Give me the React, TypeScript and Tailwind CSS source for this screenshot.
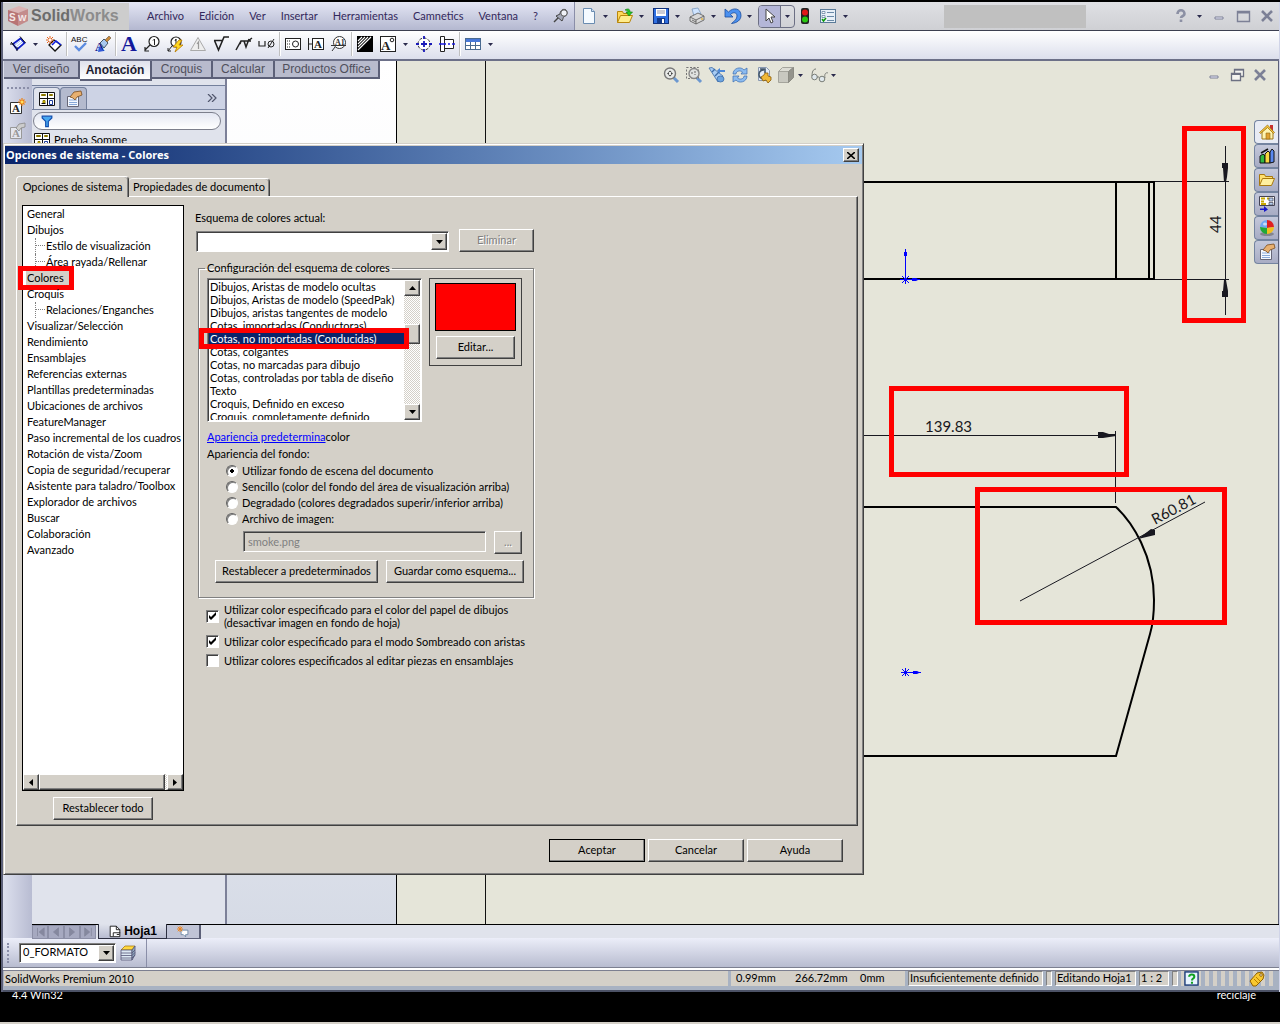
import { useState, type ReactNode } from 'react';
import clsx from 'clsx';

const raised =
  'border border-t-white border-l-white border-r-[#404040] border-b-[#404040] bg-[#d4d0c8] shadow-[inset_-1px_-1px_0_#808080]';
const sunken =
  'border border-t-[#808080] border-l-[#808080] border-r-white border-b-white shadow-[inset_1px_1px_0_#404040]';

const glyphs: Record<string, ReactNode> = {
  dimension: (
    <>
      <path d="M3 8 10.500 2.500 14.500 7 7 13.500z" fill="#fff" stroke="#1020c8" strokeWidth="1.800" />
      <path d="m1 6 5 6M10 .500 15.500 7M0 8h4M7 11v4" stroke="#111" />
      <path d="m5 9 5-4M6 11l6-5" stroke="#8ab0f0" strokeWidth=".8" />
    </>
  ),
  autoDimension: (
    <>
      <path d="m3 9 5-5 7 5-6 6z" fill="#fff" stroke="#111" strokeWidth="1.300" />
      <path d="m6 9 4-4 5 4" fill="none" stroke="#1020e0" strokeWidth="1.600" />
      <path d="M4 0v8M0 4h8M1 1l6 6M7 1 1 7" stroke="#e8641c" />
      <circle cx="4" cy="4" r="1.200" fill="#fff" />
    </>
  ),
  spelling: (
    <>
      <text x="-1" y="6" fontSize="8" fontFamily="Liberation Sans" fill="#111">ABC</text>
      <path d="m3 10 4 4 7-7" fill="none" stroke="#5b8be0" strokeWidth="2.4" />
    </>
  ),
  painter: (
    <>
      <text x="0" y="15" fontSize="13" fontWeight="bold" fontFamily="Liberation Serif" fill="#10208c">A</text>
      <path d="M5 7 9 3l4 4-4 5z" fill="#a8c8f0" stroke="#456" />
      <path d="m10 4 4-4 2 2-4 4z" fill="#c88a3c" stroke="#654" strokeWidth=".6" />
      <path d="m4 10 5 5-6 1z" fill="#3058d8" />
    </>
  ),
  note: (
    <text x="0" y="15" fontSize="22" fontWeight="bold" fontFamily="Liberation Serif" fill="#12199c">A</text>
  ),
  balloon: (
    <>
      <circle cx="10" cy="5.500" r="5" fill="#fff" stroke="#222" strokeWidth="1.2" />
      <path d="m6 9-5 5M1 11v4h4" fill="none" stroke="#222" strokeWidth="1.2" />
      <path d="M9 4.500 10.500 3v6" fill="none" stroke="#222" />
    </>
  ),
  autoBalloon: (
    <>
      <circle cx="9" cy="6" r="5" fill="#fff" stroke="#222" strokeWidth="1.2" />
      <path d="m5 10-4 5M1 12v3h3M8 5l1-2v6" fill="none" stroke="#222" />
      <path d="m12 4-6 7h4l-2 5 8-7h-4l3-5z" fill="#ffd820" stroke="#b87800" strokeWidth=".8" />
    </>
  ),
  warning: (
    <>
      <path d="M8 1.500 15.500 14.500H.5z" fill="#eee" stroke="#aaa" />
      <path d="M7 8l1.500-2v7" fill="none" stroke="#999" strokeWidth="1.200" />
    </>
  ),
  surface: <path d="M1 4.500h9M1.500 4.500 5.500 14 11 1h5" fill="none" stroke="#222" strokeWidth="1.6" />,
  weld: <path d="m0 14 5-9h10M8 5l2 6 3-8M5 5l-1 3M12 5l4-3" fill="none" stroke="#222" strokeWidth="1.5" />,
  hole: (
    <>
      <path d="M0 5v5h6V5" fill="none" stroke="#222" strokeWidth="1.2" />
      <circle cx="12" cy="8" r="3" fill="none" stroke="#222" />
      <path d="m9 12 6-9" stroke="#222" />
    </>
  ),
  tolerance: (
    <>
      <rect x=".5" y="2.500" width="15" height="11" fill="#fff" stroke="#222" />
      <path d="M2 5h3M2 8h3M2 11h3" stroke="#222" strokeDasharray="1 1" />
      <circle cx="10.500" cy="8" r="3" fill="#fff" stroke="#222" />
    </>
  ),
  datum: (
    <>
      <path d="M.5 2v12M1 8h3" stroke="#222" />
      <rect x="4.500" y="2.500" width="11" height="11" fill="#fff" stroke="#222" />
      <text x="6" y="12" fontSize="11" fontWeight="bold" fontFamily="Liberation Serif" fill="#222">A</text>
    </>
  ),
  datumTarget: (
    <>
      <circle cx="8.500" cy="6.500" r="6" fill="#fff" stroke="#333" />
      <path d="m4 11-3 4M0 9.500h15" stroke="#333" />
      <text x="4" y="9" fontSize="8" fontWeight="bold" fontFamily="Liberation Serif" fill="#333">A1</text>
    </>
  ),
  hatch: (
    <>
      <rect width="16" height="16" fill="#000" />
      <path d="M1 5 5 1M1 8l7-7M1 11 11 1M1 14 14 1" stroke="#fff" strokeWidth="1.100" />
    </>
  ),
  block: (
    <>
      <rect x=".5" y=".5" width="15" height="15" fill="#fff" stroke="#222" />
      <text x="1" y="14" fontSize="13" fontWeight="bold" fontFamily="Liberation Serif" fill="#222">A</text>
      <circle cx="12" cy="4" r="1.800" fill="#fff" stroke="#222" />
    </>
  ),
  centerMark: (
    <>
      <circle cx="8" cy="8" r="6" fill="#fff" stroke="#333" strokeDasharray="3 1.500" />
      <path d="M8 0v3M8 13v3M0 8h3M13 8h3M5 8h6M8 5v6" stroke="#1a1ab8" strokeWidth="1.800" />
    </>
  ),
  centerline: (
    <>
      <path d="M1.500.500h4v15h-4zM5.500 3.500h9v9h-9z" fill="#fff" stroke="#222" />
      <path d="M0 8h7M9 8h2M13 8h3" stroke="#1a1ae0" strokeWidth="1.600" />
    </>
  ),
  table: (
    <>
      <rect x=".5" y="2.500" width="15" height="11" fill="#fff" stroke="#4a6a90" />
      <rect x="1" y="3" width="14" height="3" fill="#4878d8" />
      <path d="M1 9.500h14M5.500 6v7M10.500 6v7" stroke="#4a6a90" />
    </>
  ),
  newDoc: (
    <>
      <path d="M2.500.5h8l3 3v12h-11z" fill="#f4faff" stroke="#6a8cb0" />
      <path d="M10.500.5v3h3" fill="#cfe0f4" stroke="#6a8cb0" />
    </>
  ),
  open: (
    <>
      <path d="M.5 14.500v-11h5l1 2h6v3" fill="#ffd85a" stroke="#b8860b" />
      <path d="m.5 14.500 3-7h12l-3 7z" fill="#ffec8c" stroke="#b8860b" />
      <path d="M8 2c3-2 5-1 5 2h2.500L12 8 9 4h2c0-1-1-2-3-2z" fill="#28c828" stroke="#0a7a0a" strokeWidth=".6" />
    </>
  ),
  save: (
    <>
      <rect x=".5" y=".5" width="15" height="15" fill="#2f6fe0" stroke="#10307c" />
      <path d="M3 1h10v7H3z" fill="#fff" />
      <path d="M4 3h8M4 5h8" stroke="#99a" />
      <path d="M4 10h8v5H4z" fill="#123a8c" />
      <path d="M9 11h2v4H9z" fill="#fff" />
    </>
  ),
  print: (
    <>
      <path d="m3 1 6-1 3 6-7 2z" fill="#cfe4ff" stroke="#7090b8" strokeWidth=".7" />
      <path d="m1 9 8-4 6 3v4l-8 4-6-3z" fill="#d8d8d8" stroke="#555" strokeWidth=".8" />
      <path d="m1 9 6 3 8-4M7 12v4M3 12l4 2" fill="none" stroke="#555" strokeWidth=".8" />
      <path d="M12 11h2" stroke="#e0a000" />
    </>
  ),
  undo: (
    <path d="M0 1v8h8L5.500 6.500C8.500 3.500 12 4.500 12 8c0 3-2.500 5-5.500 7.500C12 15 16 12 16 7.500 16 0 8-1 3.500 4z" fill="#4a90f0" stroke="#1c4c9c" strokeWidth=".8" />
  ),
  cursor: <path d="M4 1v12l3-3 2 5 2-1-2-5h4z" fill="#fff" stroke="#444" />,
  traffic: (
    <>
      <rect x="4" y="0" width="8" height="16" rx="2" fill="#222" />
      <circle cx="8" cy="4.500" r="3" fill="#e01818" />
      <circle cx="8" cy="11.500" r="3" fill="#28c810" />
    </>
  ),
  options: (
    <>
      <rect x=".5" y="1.500" width="15" height="13" fill="#e8f0f8" stroke="#5a7a98" />
      <path d="M2 3.500h3v2H2zM2 7.500h3v2H2z" fill="#fff" stroke="#5a7a98" strokeWidth=".7" />
      <path d="M7 4.500h7M7 8.500h7M7 12.500h7" stroke="#6a8aa8" />
      <path d="m2 11 1.500 2L6 10" fill="none" stroke="#0a9a0a" strokeWidth="1.500" />
    </>
  ),
  pin: (
    <>
      <path d="m1 14 5-5" stroke="#444" strokeWidth="1.500" />
      <path d="M3 8c1-1 3-1 4-2 0-3 3-6 6-4 2 2 1 6-2 6.500-1 1-1 3-2 4.500z" fill="#a4a8b8" stroke="#444" />
      <circle cx="11" cy="5" r="3.200" fill="#f0f2f8" stroke="#555" />
    </>
  ),
  zoomFit: (
    <>
      <path d="m10 10 5 5" stroke="#6c98d0" strokeWidth="3" />
      <circle cx="7" cy="6.500" r="5.500" fill="#e8eae8" stroke="#777" strokeWidth="1.400" />
      <path d="M4 6.500 6 5v3zM10 6.500 8 5v3zM7 3.500 5.500 5h3zM7 9.500 5.500 8h3z" fill="#444" />
    </>
  ),
  zoomArea: (
    <>
      <path d="m10 10 5 5" stroke="#6c98d0" strokeWidth="3" />
      <path d="M.5.5h12v11H.5z" fill="none" stroke="#777" strokeDasharray="2 1.500" />
      <circle cx="8" cy="6.500" r="5" fill="#e0e2e0" stroke="#888" strokeWidth="1.400" />
      <path d="M6 5v3M9 4v4" stroke="#666" strokeDasharray="2 1" />
    </>
  ),
  previous: (
    <>
      <path d="m0 1 3-.500L14 9l-5 6z" fill="#a8ccf4" stroke="#3c6ca8" strokeWidth=".8" />
      <path d="m3 5 3-3M6 9l4-4" stroke="#3c6ca8" strokeWidth="1.400" />
      <ellipse cx="11.500" cy="12" rx="3.500" ry="3" fill="#6ca4e0" stroke="#3c6ca8" strokeWidth=".8" />
      <path d="M8 3.500 11 1v2h5v2h-5v1.500z" fill="#4c88d8" />
    </>
  ),
  rotate: (
    <path d="M1 7c0-6 8-8 11-4l3-2v6H9l1.500-2C8 3 4 4 4 7zM15 9c0 6-8 8-11 4l-3 2V9h6l-1.500 2c2.500 2 6.500 1 6.500-2z" fill="#8cbcf0" stroke="#3a6cb0" strokeWidth=".7" />
  ),
  view3d: (
    <>
      <path d="M3.500.500h8l3 3v10h-11z" fill="#e4ecf8" stroke="#8898b0" />
      <path d="M9 3a4.500 4.500 0 1 0-1 9M5 2h5v4" fill="none" stroke="#44586c" strokeWidth="1.600" />
      <path d="m6 10 3-2 1-2h3v3l3 1v3l-3 3-2-3-3 1z" fill="#f0b838" stroke="#8a5a08" strokeWidth=".8" />
    </>
  ),
  cube: (
    <>
      <path d="M.5 4.500h10v11H.5z" fill="#c8c8c0" stroke="#a4a49c" />
      <path d="m.5 4.500 4-4h11l-5 4z" fill="#dcdcd4" stroke="#a4a49c" />
      <path d="m10.500 4.500 5-4v10l-5 5z" fill="#94948c" stroke="#8c8c84" />
    </>
  ),
  glasses: (
    <>
      <circle cx="3.500" cy="10" r="2.800" fill="#dfe8ec" stroke="#7a7e78" />
      <circle cx="11" cy="12" r="2.800" fill="#dfe8ec" stroke="#7a7e78" />
      <path d="M1 9c0-4 1-7 4-7M6 10h2M14 11c-1-4 1-6 3-5" fill="none" stroke="#7a7e78" />
    </>
  ),
  house: (
    <>
      <path d="M11 1h3v6h-3z" fill="#c83030" />
      <path d="M3 8v7h11V8L8.500 3z" fill="#fff4b0" stroke="#a07818" />
      <path d="m.5 8.500 8-7.500 7 7.500-1 1-6-6-7 6z" fill="#f8c840" stroke="#906810" strokeWidth=".7" />
      <path d="M7 9h4v6H7z" fill="#e0a030" stroke="#906810" strokeWidth=".6" />
    </>
  ),
  library: (
    <>
      <path d="m1 8 3-2 2 2v7H1z" fill="#30b840" stroke="#111" />
      <path d="m6 6 3-3 2 2v10H6z" fill="#f8d840" stroke="#111" />
      <path d="m11 4 2-3 2 2v11l-4 1z" fill="#5a88f0" stroke="#111" />
      <path d="m2 5 7-4" stroke="#111" strokeWidth="1.500" />
    </>
  ),
  folder: (
    <>
      <path d="M.5 13.500v-11h5l1 2h7v3" fill="#ffe070" stroke="#a87810" />
      <path d="m.5 13.500 3-7h12l-3 7z" fill="#fff0a0" stroke="#a87810" />
    </>
  ),
  palette: (
    <>
      <path d="M.5.5h15v9H.5z" fill="#fff" stroke="#445" />
      <path d="M2 2.500h4M2 5.500h3M8 2.500h2M2 8h5" stroke="#c8a800" strokeWidth="1.800" />
      <path d="M10 2h4v3h-4zM10 6.500h4V9h-4z" fill="#b8d0f0" stroke="#445" strokeWidth=".7" />
      <path d="M1 12.500h4V10l4 3.500L5 16v-2H1z" fill="#1818c8" />
    </>
  ),
  sphere: (
    <>
      <ellipse cx="8" cy="14" rx="7" ry="2" fill="#666" opacity=".6" />
      <path d="M8 0a7 7 0 0 0-7 7l7 1z" fill="#70a8f0" />
      <path d="M8 0a7 7 0 0 1 7 7L8 8z" fill="#e02020" />
      <path d="M1 7a7 7 0 0 0 7 7V8z" fill="#20a838" />
      <path d="M15 7a7 7 0 0 1-7 7V8z" fill="#f0c020" />
      <ellipse cx="6" cy="4" rx="2" ry="1.500" fill="#fff" opacity=".6" />
    </>
  ),
  properties: (
    <>
      <path d="M1.500 5.500h11v10h-11z" fill="#f4f8ff" stroke="#667" />
      <path d="M3 9h8M3 11.500h8M3 13.500h8" stroke="#88a8d8" />
      <path d="M4 6 8 1l7-1 1 4-5 2-2 3-2-2z" fill="#e8b070" stroke="#7a4c20" strokeWidth=".8" />
    </>
  ),
  featureTree: (
    <>
      <path d="M.5 1.500h15v13H.5z" fill="#fff" stroke="#111" />
      <path d="M2.500 3.500h4v1h-4zM10.500 3.500h3v1h-3z" fill="#f8e000" stroke="#8a7800" />
      <path d="M4 12V9.500h2V12z" fill="#f8e000" stroke="#8a7800" />
      <path d="M8.500 2v12M1 7.500h14M2.500 12.500h4" stroke="#111" />
      <path d="M10.500 9.500h3v4h-3z" fill="#fff" stroke="#2040a0" />
    </>
  ),
  noteNew: (
    <>
      <path d="M.5 4.500h11v11H.5z" fill="#fff" stroke="#333" />
      <text x="2" y="14" fontSize="11" fontWeight="bold" fontFamily="Liberation Serif" fill="#222">A</text>
      <path d="M12 0v8M8 4h8M9.500 1.500l5 5M14.500 1.500l-5 5" stroke="#f08010" strokeWidth="1.200" />
      <circle cx="12" cy="4" r="1.500" fill="#ffe060" />
    </>
  ),
  noteEdit: (
    <>
      <path d="M.5 4.500h11v11H.5z" fill="#e4e6ee" stroke="#999" />
      <text x="2" y="14" fontSize="11" fontWeight="bold" fontFamily="Liberation Serif" fill="#999">A</text>
      <path d="m6 5 3-4 6-1v4l-4 1-2 3z" fill="#ccc" stroke="#888" strokeWidth=".8" />
    </>
  ),
  funnel: <path d="M2.500 2.500h11v2l-4 4v6h-3v-6l-4-4z" fill="#48a8f0" stroke="#1450b0" strokeWidth="1.400" />,
  layers: (
    <>
      <path d="m1 5 4-4h10l-3 4z" fill="#ffd840" stroke="#a07000" strokeWidth=".7" />
      <path d="M1 5h11v10H1z" fill="#dce8f4" stroke="#557" strokeWidth=".8" />
      <path d="m12 5 3-4v9l-3 5z" fill="#90a8c0" stroke="#557" strokeWidth=".8" />
      <path d="M1 8h11l3-3M1 10.500h11l3-3M1 13h11l3-3" fill="none" stroke="#557" strokeWidth=".8" />
    </>
  ),
  sheet: (
    <>
      <path d="M2.500 2.500h7l4 4v8h-11z" fill="#fff" stroke="#111" />
      <path d="M9.500 2.500v4h4M6 14v-4h8M10 12h3" fill="none" stroke="#111" />
    </>
  ),
  addSheet: (
    <>
      <path d="M5.500 5.500h9v6h-3v3l-3-3h-3z" fill="#fff" stroke="#5a7a98" />
      <path d="M4 0v8M0 4h8M1 1l6 6M7 1 1 7" stroke="#f08010" strokeWidth="1.200" />
    </>
  ),
  tag: (
    <>
      <path d="m1 10 7-8 5-1 2 3-1 4-7 7-3 0z" fill="#f8c830" stroke="#906000" />
      <circle cx="12" cy="4" r="1.300" fill="#fff" stroke="#906000" />
      <path d="m5 8 4 4M7 6l4 4" stroke="#b88000" />
    </>
  ),
  help: (
    <>
      <rect x="1" y="1" width="14" height="14" fill="#e8f4ff" stroke="#1c3c78" strokeWidth="1.500" />
      <path d="M5.500 6c0-3 5.500-3 5.500 0 0 2-2.500 2-2.500 4M8.500 11.500v2" fill="none" stroke="#10a020" strokeWidth="2.200" />
    </>
  ),
  bigHelp: (
    <path d="M4.500 6c0-5 7-5 7 0 0 2-3.500 2-3.500 4M8 11.500v2.500" fill="none" stroke="#8c90a4" strokeWidth="2.600" />
  ),
  minimize: <path d="M4 9h8v2H4z" fill="#eef" stroke="#7c8096" />,
  maximize: (
    <>
      <path d="M2.500 3.500h12v10h-12z" fill="none" stroke="#7c8096" strokeWidth="1.400" />
      <path d="M2 4.500h13" stroke="#7c8096" strokeWidth="2" />
    </>
  ),
  restore: (
    <>
      <path d="M5.500 2.500h9v7h-9z" fill="#f4f4f0" stroke="#6c7082" strokeWidth="1.300" />
      <path d="M2.500 6.500h9v7h-9z" fill="#f4f4f0" stroke="#6c7082" strokeWidth="1.300" />
      <path d="M2 7.500h10M5 3h10" stroke="#6c7082" />
    </>
  ),
  close: <path d="m3 3 10 10M13 3 3 13" stroke="#7c8096" strokeWidth="2.600" />,
};

function Icon({ name, className = 'w-4 h-4' }: { name: string; className?: string }) {
  return (
    <svg viewBox="0 0 16 16" className={clsx('shrink-0 overflow-visible', className)} aria-hidden="true">
      {glyphs[name]}
    </svg>
  );
}

function IconButton({ name, label }: { name: string; label: string }) {
  return (
    <button type="button" aria-label={label} className="shrink-0">
      <Icon name={name} />
    </button>
  );
}

function Caret({ label }: { label: string }) {
  return (
    <button type="button" aria-label={label} className="mr-px shrink-0">
      <svg viewBox="0 0 5 3" className="w-[5px] h-[3px]" aria-hidden="true">
        <path d="M0 0h5L2.500 3z" fill="#2a2a4c" />
      </svg>
    </button>
  );
}

function Separator() {
  return <span className="-mx-[3px] h-6 w-0.5 shrink-0 border-l border-[#c0c0c0] bg-white" />;
}

const arrowPaths = {
  up: 'M0 4h7L3.500 0z',
  down: 'M0 0h7L3.500 4z',
  left: 'M4 0v7L0 3.500z',
  right: 'M0 0v7l4-3.500z',
};

function ScrollArrow({ dir, label }: { dir: keyof typeof arrowPaths; label: string }) {
  return (
    <button type="button" aria-label={label} className={clsx('flex h-4 w-4 shrink-0 items-center justify-center', raised)}>
      <svg viewBox={dir === 'up' || dir === 'down' ? '0 0 7 4' : '0 0 4 7'} className={dir === 'up' || dir === 'down' ? 'w-[7px] h-1' : 'w-1 h-[7px]'}>
        <path d={arrowPaths[dir]} />
      </svg>
    </button>
  );
}

function Button({ children, className, disabled }: { children: ReactNode; className?: string; disabled?: boolean }) {
  return (
    <button
      type="button"
      disabled={disabled}
      className={clsx('flex h-[23px] shrink-0 items-center justify-center', raised, disabled && 'text-[#808080] [text-shadow:1px_1px_0_#fff]', className)}
    >
      {children}
    </button>
  );
}

const menus = ['Archivo', 'Edición', 'Ver', 'Insertar', 'Herramientas', 'Camnetics', 'Ventana', '?'];

const quickAccess = [
  ['newDoc', 'Nuevo'],
  ['open', 'Abrir'],
  ['save', 'Guardar'],
  ['print', 'Imprimir'],
  ['undo', 'Deshacer'],
];

function MenuBar() {
  return (
    <header className="flex h-[29px] shrink-0 items-stretch border-b border-[#3c3f50] bg-gradient-to-b from-[#dfe0e4] to-[#cfd0d4]">
      <div className="flex w-[572px] shrink-0 items-center border-r border-[#8a8ea8] bg-gradient-to-b from-[#e4e6f4] to-[#b4b8d0]">
        <div className="flex h-[27px] w-[126px] shrink-0 items-center gap-0.5 bg-[#cdcdcd] pl-1">
          <svg viewBox="0 0 22 22" className="h-[22px] w-[22px]" aria-hidden="true">
            <path d="M1 5 12 1l9 3-10 4z" fill="#dcb4b4" />
            <path d="m1 5 10 3v13L1 16z" fill="#b87474" />
            <path d="m11 8 10-4v12l-10 5z" fill="#c48c8c" />
            <text x="2" y="16" fontSize="10" fontWeight="bold" fontFamily="Liberation Sans" fill="#f4e8e8">S</text>
            <text x="11" y="16" fontSize="9" fontWeight="bold" fontFamily="Liberation Sans" fill="#f4e8e8">W</text>
          </svg>
          <span className="font-['Liberation_Sans',sans-serif] text-base font-bold text-[#8c8c8c]">
            <span className="text-[#6c6c6c]">Solid</span>Works
          </span>
        </div>
        <nav className="ml-[18px] flex items-center gap-[15px] text-[11px] text-[#33285c]">
          {menus.map((m) => (
            <button key={m} type="button">{m}</button>
          ))}
          <IconButton name="pin" label="Fijar menú" />
        </nav>
      </div>
      <div className="flex flex-1 items-center pl-[6px]">
        <div className="flex items-center gap-2">
          {quickAccess.map(([name, label]) => (
            <div key={name} className="flex items-center gap-[6px]">
              <IconButton name={name} label={label} />
              <Caret label={`${label}: más`} />
            </div>
          ))}
        </div>
        <div className="ml-[5px] flex h-[23px] w-[37px] items-stretch overflow-hidden rounded border border-[#6c6f84]">
          <div className="flex w-[22px] items-center justify-center border-r border-[#6c6f84] bg-[#b4b6d8]">
            <IconButton name="cursor" label="Seleccionar" />
          </div>
          <div className="flex flex-1 items-center justify-center">
            <Caret label="Seleccionar: más" />
          </div>
        </div>
        <div className="ml-0.5 flex items-center gap-[7px]">
          <IconButton name="traffic" label="Reconstruir" />
          <IconButton name="options" label="Opciones" />
          <Caret label="Opciones: más" />
        </div>
        <div className="mr-[87px] ml-auto h-[23px] w-[142px] bg-[#c0c0c0]" />
        <div className="mr-1 flex items-center gap-2">
          <IconButton name="bigHelp" label="Ayuda" />
          <Caret label="Ayuda: más" />
          <IconButton name="minimize" label="Minimizar" />
          <IconButton name="maximize" label="Maximizar" />
          <IconButton name="close" label="Cerrar" />
        </div>
      </div>
    </header>
  );
}

function AnnotationToolbar() {
  return (
    <div className="flex h-[30px] shrink-0 items-center gap-[7px] border-b-2 border-[#6c7088] bg-gradient-to-b from-white to-[#dcdfec] pb-0.5 pl-[7px]">
      <IconButton name="dimension" label="Cota inteligente" />
      <Caret label="Cotas: más" />
      <IconButton name="autoDimension" label="Acotar automáticamente" />
      <Separator />
      <IconButton name="spelling" label="Ortografía" />
      <IconButton name="painter" label="Copiar formato" />
      <Separator />
      <IconButton name="note" label="Nota" />
      <IconButton name="balloon" label="Globo" />
      <IconButton name="autoBalloon" label="Globo automático" />
      <IconButton name="warning" label="Globo magnético" />
      <IconButton name="surface" label="Acabado superficial" />
      <IconButton name="weld" label="Símbolo de soldadura" />
      <IconButton name="hole" label="Llamada de taladro" />
      <Separator />
      <IconButton name="tolerance" label="Tolerancia geométrica" />
      <IconButton name="datum" label="Indicación de referencia" />
      <IconButton name="datumTarget" label="Referencia parcial" />
      <Separator />
      <IconButton name="hatch" label="Rayado" />
      <IconButton name="block" label="Bloque" />
      <Caret label="Bloques: más" />
      <IconButton name="centerMark" label="Centro de círculo" />
      <IconButton name="centerline" label="Línea constructiva" />
      <Separator />
      <IconButton name="table" label="Tablas" />
      <Caret label="Tablas: más" />
    </div>
  );
}

const commandTabs = [
  ['Ver diseño', 'w-[76px]'],
  ['Anotación', 'w-[72px]'],
  ['Croquis', 'w-[61px]'],
  ['Calcular', 'w-[62px]'],
  ['Productos Office', 'w-[105px]'],
];

function CommandTabs() {
  return (
    <div className="absolute top-0 left-px z-10 flex items-start font-['Liberation_Sans',sans-serif] text-xs">
      {commandTabs.map(([name, width]) => (
        <button
          key={name}
          type="button"
          className={clsx(
            'border-r-2 border-b-2 border-[#5c6078]',
            width,
            name === 'Anotación' ? 'h-5 bg-gradient-to-b from-[#dfe1ec] to-white font-bold text-[#1c1c30]' : 'h-[18px] bg-[#b8bbcd] text-[#50505c]',
          )}
        >
          {name}
        </button>
      ))}
    </div>
  );
}

function FeaturePanel() {
  return (
    <aside className="flex w-[195px] shrink-0 flex-col border-r-2 border-[#7c8098] bg-[#e0e3ec] pt-5">
      <div className="mt-1 flex h-[25px] items-end border-t border-b border-[#74809c] bg-[#cdd3e5] pl-px">
        <button type="button" aria-label="Gestor de diseño" className="flex h-[22px] w-[27px] items-center justify-center rounded-t border border-b-0 border-[#74809c] bg-[#e0e3ec]">
          <Icon name="featureTree" />
        </button>
        <button type="button" aria-label="Propiedades" className="flex h-[22px] w-[27px] items-center justify-center rounded-t border border-b-0 border-[#74809c] bg-[#b4bace]">
          <Icon name="properties" />
        </button>
        <button type="button" aria-label="Más paneles" className="mr-2 mb-[7px] ml-auto">
          <svg viewBox="0 0 10 8" className="h-2 w-2.5" aria-hidden="true">
            <path d="m1 0 4 4-4 4M5 0l4 4-4 4" fill="none" stroke="#50566c" strokeWidth="1.200" />
          </svg>
        </button>
      </div>
      <label className="mt-0.5 mr-1 ml-px flex h-[18px] items-center rounded-full border border-[#7c7f8c] bg-gradient-to-b from-[#e4e7f2] to-white px-1.5">
        <Icon name="funnel" className="h-3.5 w-3.5" />
        <input type="text" aria-label="Filtrar" className="min-w-0 flex-1 bg-transparent px-1 outline-none" />
      </label>
      <div className="mt-0.5 ml-0.5 flex items-center gap-[4px]">
        <Icon name="featureTree" />
        <span>Prueba Somme</span>
      </div>
    </aside>
  );
}

// Sheet coordinates are window pixels, shifted to the sheet's own corner.
function Drawing() {
  return (
    <svg className="absolute inset-0 h-full w-full font-['Lato',sans-serif]" role="img" aria-label="Plano de la pieza">
      <g transform="translate(-397 -61)">
        <path d="M485.500 61v863" stroke="#111" />
        <g fill="none" stroke="#000" strokeWidth="2">
          <path d="M500 182h654v97H500M1116 182v97M1149 182v97" />
          <path d="M500 507h616C1132 522 1154 555 1154 600c0 14-1 24-4 34L1116 756H500" />
        </g>
        <g fill="none" stroke="#181820">
          <path d="M1155 181.500h74M1155 279.500h74M1225.500 146v169" />
          <path d="M500 435.500h616M1115.500 431v72" />
          <path d="m1020 601 185-99" />
        </g>
        <g fill="#181820">
          <path d="M1222 163h6v5l-1 9-1 5h-2l-1-14h-1zM1222 297h6v-6l-2-11h-2l-1 11h-1z" />
          <path d="M1098 432v6h5l13-2v-2h-7l-6-2zM1138 539l13-10 4 1v5z" />
        </g>
        <g fill="#181820" fontSize="15">
          <text x="925" y="432">139.83</text>
          <text transform="translate(1221 233) rotate(-90)">44</text>
          <text transform="translate(1155 525) rotate(-28)">R60.81</text>
        </g>
        <g fill="#00f" stroke="#00f">
          <path d="M905.500 279v-30M900 279.500h20M902 276l7 7M909 276l-7 7M905.500 276v8" fill="none" />
          <path d="M904 252h3v4h-3zM912 278h4l3 1.500-3 1.500h-4z" stroke="none" />
          <path d="M901 672.500h20M902 669l7 7M909 669l-7 7M905.500 668v8" fill="none" />
          <path d="M913 671h4l3 1.500-3 1.500h-4z" stroke="none" />
        </g>
        <g fill="none" stroke="#f00" strokeWidth="5">
          <rect x="1184.500" y="128.500" width="59" height="192" />
          <rect x="891.500" y="388.500" width="235" height="86" />
          <rect x="977.500" y="489.500" width="247" height="133" />
        </g>
      </g>
    </svg>
  );
}

const taskPanes = [
  ['house', 'Recursos'],
  ['library', 'Biblioteca de diseño'],
  ['folder', 'Explorador de archivos'],
  ['palette', 'Paleta de visualización'],
  ['sphere', 'Apariencias'],
  ['properties', 'Propiedades personalizadas'],
];

function Sheet() {
  return (
    <section className="relative min-w-0 flex-1 border-r border-l border-r-[#5c6078] border-l-black bg-[#e5e5d9]">
      <Drawing />
      <div className="relative flex h-7 items-center justify-between pr-2.5 pl-[266px]">
        <div className="flex items-center gap-[7px]">
          <IconButton name="zoomFit" label="Zoom para ajustar" />
          <IconButton name="zoomArea" label="Zoom encuadre" />
          <IconButton name="previous" label="Vista previa" />
          <IconButton name="rotate" label="Girar vista" />
          <IconButton name="view3d" label="Vista de dibujo 3D" />
          <div className="flex items-center gap-1">
            <IconButton name="cube" label="Estilo de visualización" />
            <Caret label="Estilo: más" />
          </div>
          <div className="flex items-center gap-1">
            <IconButton name="glasses" label="Ocultar/mostrar" />
            <Caret label="Ocultar: más" />
          </div>
        </div>
        <div className="flex gap-[7px]">
          <IconButton name="minimize" label="Minimizar hoja" />
          <IconButton name="restore" label="Restaurar hoja" />
          <IconButton name="close" label="Cerrar hoja" />
        </div>
      </div>
      <div className="absolute top-[59px] right-0 flex flex-col">
        {taskPanes.map(([name, label], i) => (
          <button
            key={label}
            type="button"
            aria-label={label}
            className={clsx(
              'flex h-6 w-6 items-center justify-center rounded-l border border-r-0 border-[#7484a0]',
              i === 0 ? 'bg-[#e8ebf4]' : 'bg-gradient-to-b from-[#c4c8da] to-[#a8acc4]',
            )}
          >
            <Icon name={name} />
          </button>
        ))}
      </div>
    </section>
  );
}

const sheetNav = [
  ['M4 1v10M12 1v10L6 6z', 'Primera hoja'],
  ['M10 1v10L4 6z', 'Hoja anterior'],
  ['M4 1v10l6-5z', 'Hoja siguiente'],
  ['M3 1v10l6-5zM11 1v10', 'Última hoja'],
];

function SheetTabs() {
  return (
    <div className="flex h-[14px] shrink-0 items-start border-t border-black bg-[#e0e3ec]">
      {sheetNav.map(([d, label]) => (
        <button key={label} type="button" aria-label={label} className="flex h-[14px] w-4 items-center justify-center border border-[#8c8fa6] bg-[#a6a9c0]">
          <svg viewBox="0 0 14 12" className="h-2.5 w-3" aria-hidden="true">
            <path d={d} fill="#85889e" stroke="#85889e" />
          </svg>
        </button>
      ))}
      <button type="button" className="-mt-px ml-0.5 flex h-[15px] w-[69px] items-center justify-center gap-0.5 border-r border-b border-l border-[#2c2f40] bg-gradient-to-b from-[#e0e3ec] to-[#b8bcd0] font-['Liberation_Sans',sans-serif] text-xs leading-[14px] font-bold">
        <Icon name="sheet" className="h-3.5 w-3.5" />
        Hoja1
      </button>
      <button type="button" aria-label="Agregar hoja" className="flex h-[14px] w-[34px] items-center justify-center border-r-2 border-b border-[#5c6078] bg-[#c0c4d6]">
        <Icon name="addSheet" className="h-3 w-3.5" />
      </button>
    </div>
  );
}

function FormatBar() {
  return (
    <div className="flex h-[29px] shrink-0 items-stretch bg-gradient-to-b from-[#eceef9] to-[#b8bcd0]">
      <div className="flex items-center border-r border-[#8a8ea8] pr-[10px] pl-1">
        <span className="mr-2.5 h-5 border-l-2 border-dotted border-[#8a8ea8]" />
        <div className="relative">
          <select aria-label="Capa" className={clsx('h-5 w-[97px] appearance-none bg-white pl-[3px]', sunken)}>
            <option>0_FORMATO</option>
          </select>
          <span className={clsx('pointer-events-none absolute top-0.5 right-0.5 flex h-4 w-4 items-center justify-center', raised)}>
            <svg viewBox="0 0 7 4" className="h-1 w-[7px]"><path d="M0 0h7L3.500 4z" /></svg>
          </span>
        </div>
        <span className="ml-1 flex">
          <IconButton name="layers" label="Propiedades de capa" />
        </span>
      </div>
    </div>
  );
}

function StatusBar() {
  const cell = 'flex h-[15px] shrink-0 items-center border border-t-[#808080] border-l-[#808080] border-r-white border-b-white bg-[#d4d0c8] pl-px';
  return (
    <footer className="shrink-0 border-b-2 border-[#4c5266] bg-[#a8b2c2] pb-1">
      <div className="h-1 border-t border-b border-[#7c7f90] bg-white" />
      <div className="flex h-[15px] items-stretch gap-[3px] pr-0.5 pl-px whitespace-nowrap">
        <span className="min-w-0 flex-1 bg-[#d4d0c8] pl-px leading-[15px]">SolidWorks Premium 2010</span>
        <div className="flex w-[174px] items-center bg-[#d4d0c8] pl-[5px]">
          <span className="w-[59px]">0.99mm</span>
          <span className="w-[65px]">266.72mm</span>
          <span>0mm</span>
        </div>
        <span className={clsx(cell, 'w-[135px]')}>Insuficientemente definido</span>
        <span className={clsx(cell, 'w-[6px]')} />
        <span className={clsx(cell, 'w-[81px]')}>Editando Hoja1</span>
        <span className={clsx(cell, 'w-[30px]')}>1 : 2</span>
        <span className={clsx(cell, 'w-[6px]')} />
        <span className="flex h-[15px] w-24 items-center justify-between bg-[repeating-linear-gradient(90deg,#d4d0c8_0_4px,#a8b2c2_4px_8px)] pr-3 pl-[3px]">
          <button type="button" aria-label="Ayuda rápida" className="flex"><Icon name="help" className="h-[15px] w-[15px]" /></button>
          <button type="button" aria-label="Etiquetas" className="flex"><Icon name="tag" /></button>
        </span>
      </div>
    </footer>
  );
}

const optionTree = [
  { name: 'General' },
  { name: 'Dibujos' },
  { name: 'Estilo de visualización', child: true },
  { name: 'Área rayada/Rellenar', child: true },
  { name: 'Colores' },
  { name: 'Croquis' },
  { name: 'Relaciones/Enganches', child: true },
  { name: 'Visualizar/Selección' },
  { name: 'Rendimiento' },
  { name: 'Ensamblajes' },
  { name: 'Referencias externas' },
  { name: 'Plantillas predeterminadas' },
  { name: 'Ubicaciones de archivos' },
  { name: 'FeatureManager' },
  { name: 'Paso incremental de los cuadros' },
  { name: 'Rotación de vista/Zoom' },
  { name: 'Copia de seguridad/recuperar' },
  { name: 'Asistente para taladro/Toolbox' },
  { name: 'Explorador de archivos' },
  { name: 'Buscar' },
  { name: 'Colaboración' },
  { name: 'Avanzado' },
];

const colorItems = [
  'Dibujos, Aristas de modelo ocultas',
  'Dibujos, Aristas de modelo (SpeedPak)',
  'Dibujos, aristas tangentes de modelo',
  'Cotas, importadas (Conductoras)',
  'Cotas, no importadas (Conducidas)',
  'Cotas, colgantes',
  'Cotas, no marcadas para dibujo',
  'Cotas, controladas por tabla de diseño',
  'Texto',
  'Croquis, Definido en exceso',
  'Croquis, completamente definido',
];

const backgrounds = [
  'Utilizar fondo de escena del documento',
  'Sencillo (color del fondo del área de visualización arriba)',
  'Degradado (colores degradados superir/inferior arriba)',
  'Archivo de imagen:',
];

const track = 'bg-[repeating-conic-gradient(#fff_0_25%,#d4d0c8_0_50%)] bg-[length:2px_2px]';

function OptionTree() {
  return (
    <div className="flex h-[586px] w-[162px] flex-col border border-black bg-white">
      <ul className="flex-1">
        {optionTree.map(({ name, child }) => (
          <li key={name} className={clsx('relative flex h-4 items-center whitespace-nowrap', child ? 'pl-3' : 'pl-[3px]')}>
            {child && <span className="h-4 w-2.5 border-l border-dotted border-[#808080]"><span className="block h-2 border-b border-dotted border-[#808080]" /></span>}
            <button type="button" className={clsx('px-px leading-[14px]', name === 'Colores' && 'bg-[#d4d0c8] pr-1.5')}>{name}</button>
            {name === 'Colores' && <span className="absolute -top-1 -left-[5px] h-6 w-14 border-[5px] border-[#f00]" />}
          </li>
        ))}
      </ul>
      <div className={clsx('flex', track)}>
        <ScrollArrow dir="left" label="Desplazar a la izquierda" />
        <span className={clsx('flex-1', raised)} />
        <span className="w-0.5" />
        <ScrollArrow dir="right" label="Desplazar a la derecha" />
      </div>
    </div>
  );
}

function ColorList({ selected, onSelect }: { selected: string; onSelect: (name: string) => void }) {
  return (
    <div className="relative">
      <div className={clsx('flex h-36 w-[215px] bg-white p-px', sunken)}>
        <ul role="listbox" aria-label="Elementos de color" className="h-full flex-1 overflow-hidden">
          {colorItems.map((name) => (
            <li
              key={name}
              role="option"
              aria-selected={name === selected}
              onClick={() => onSelect(name)}
              className={clsx('h-[13px] pl-px leading-[13px] whitespace-nowrap', name === selected && 'bg-[#0a246a] text-white')}
            >
              {name}
            </li>
          ))}
        </ul>
        <div className={clsx('flex w-4 flex-col', track)}>
          <ScrollArrow dir="up" label="Subir" />
          <span className={clsx('mt-7 h-5', raised)} />
          <span className="flex-1" />
          <ScrollArrow dir="down" label="Bajar" />
        </div>
      </div>
      <span className="pointer-events-none absolute top-[50px] -left-2 h-[21px] w-[210px] border-[5px] border-[#f00]" />
    </div>
  );
}

function Check({ children, defaultChecked }: { children: ReactNode; defaultChecked?: boolean }) {
  return (
    <label className="flex items-center gap-[5px] leading-[13px]">
      <span className="relative flex">
        <input type="checkbox" defaultChecked={defaultChecked} className={clsx('peer h-[13px] w-[13px] appearance-none bg-white', sunken)} />
        <svg viewBox="0 0 13 13" className="pointer-events-none absolute inset-0 hidden h-[13px] w-[13px] peer-checked:block">
          <path d="M3 5v3l2 2 5-5V2L5 7z" />
        </svg>
      </span>
      <span>{children}</span>
    </label>
  );
}

function ColorSettings() {
  const [selected, setSelected] = useState('Cotas, no importadas (Conducidas)');
  const [background, setBackground] = useState(backgrounds[0]);

  return (
    <div className="w-[339px]">
      <label htmlFor="scheme" className="block leading-[14px]">Esquema de colores actual:</label>
      <div className="mt-px ml-px flex items-end justify-between">
        <div className="relative">
          <select id="scheme" className={clsx('block h-[21px] w-[253px] appearance-none bg-white pl-1', sunken)}>
            <option />
          </select>
          <span className={clsx('pointer-events-none absolute top-0.5 right-0.5 flex h-[17px] w-4 items-center justify-center', raised)}>
            <svg viewBox="0 0 7 4" className="h-1 w-[7px]"><path d="M0 0h7L3.500 4z" /></svg>
          </span>
        </div>
        <div className="pt-[3px]">
          <Button disabled className="w-[75px]">Eliminar</Button>
        </div>
      </div>

      <fieldset className="mt-[9px] ml-[3px] h-[337px] border border-[#808080] pl-2 shadow-[1px_1px_0_#fff,inset_1px_1px_0_#fff]">
        <legend className="px-0.5 leading-[14px] -ml-0.5">Configuración del esquema de colores</legend>
        <div className="mt-[3px] flex gap-[7px]">
          <ColorList selected={selected} onSelect={setSelected} />
          <div className="flex h-[88px] w-[93px] flex-col items-center gap-[5px] border border-[#404040] pt-1">
            <div className="h-12 w-[81px] border border-black bg-[#f00]" />
            <Button className="w-[79px]">Editar...</Button>
          </div>
        </div>
        <p className="mt-2 leading-[14px]">
          <a href="#apariencia" className="text-[#00f] underline">Apariencia predetermina</a>color
        </p>
        <p className="mt-[3px] leading-[14px]">Apariencia del fondo:</p>
        <div className="mt-0.5 ml-[19px]">
          {backgrounds.map((name) => (
            <label key={name} className="flex h-4 items-center gap-1 whitespace-nowrap">
              <input
                type="radio"
                name="background"
                checked={background === name}
                onChange={() => setBackground(name)}
                className="h-3 w-3 appearance-none rounded-full border border-t-[#606060] border-r-white border-b-white border-l-[#606060] bg-white shadow-[inset_1px_1px_0_#808080] checked:bg-[radial-gradient(circle,#000_0_2px,#fff_2px)]"
              />
              {name}
            </label>
          ))}
        </div>
        <div className="mt-1 ml-9 flex gap-2">
          <input type="text" aria-label="Archivo de imagen" disabled defaultValue="smoke.png" className={clsx('h-[21px] w-[243px] pl-1 text-[#808080]', sunken)} />
          <Button disabled className="w-7">...</Button>
        </div>
        <div className="mt-1.5 ml-2 flex gap-2">
          <Button className="w-[163px]">Restablecer a predeterminados</Button>
          <Button className="w-[138px]">Guardar como esquema...</Button>
        </div>
      </fieldset>

      <div className="mt-[5px] ml-[11px] flex flex-col gap-[6px] whitespace-nowrap">
        <Check defaultChecked>
          Utilizar color especificado para el color del papel de dibujos
          <br />
          (desactivar imagen en fondo de hoja)
        </Check>
        <Check defaultChecked>Utilizar color especificado para el modo Sombreado con aristas</Check>
        <Check>Utilizar colores especificados al editar piezas en ensamblajes</Check>
      </div>
    </div>
  );
}

function OptionsDialog() {
  return (
    <div
      role="dialog"
      aria-label="Opciones de sistema - Colores"
      className="absolute top-[143px] left-[3px] z-20 w-[861px] border border-t-[#d4d0c8] border-r-[#404040] border-b-[#404040] border-l-[#d4d0c8] bg-[#d4d0c8] pb-3 shadow-[inset_1px_1px_0_#fff,inset_-1px_-1px_0_#808080]"
    >
      <div className="mx-px mt-0.5 flex h-[18px] items-center justify-between bg-gradient-to-r from-[#0a246a] to-[#a6caf0] pr-[3px] pl-px">
        <h1 className="font-['Noto_Sans',sans-serif] text-[11px] font-bold text-white">Opciones de sistema - Colores</h1>
        <button type="button" aria-label="Cerrar" className={clsx('flex h-3.5 w-4 items-center justify-center', raised)}>
          <svg viewBox="0 0 8 7" className="h-[7px] w-2"><path d="m0 0 8 7M8 0 0 7" stroke="#000" strokeWidth="1.600" /></svg>
        </button>
      </div>

      <div className="mt-3 ml-3 flex items-end">
        <button type="button" className="relative z-10 -mb-px h-[21px] w-[113px] rounded-t-sm border border-b-0 border-t-white border-r-[#404040] border-l-white bg-[#d4d0c8] shadow-[inset_-1px_0_0_#808080]">
          Opciones de sistema
        </button>
        <button type="button" className="h-[18px] w-[141px] rounded-t-sm border border-b-0 border-l-0 border-t-white border-r-[#404040] shadow-[inset_-1px_0_0_#808080]">
          Propiedades de documento
        </button>
      </div>
      <div className={clsx('mr-[5px] ml-3 flex items-start gap-[11px] pt-2 pb-[5px] pl-[5px]', raised)}>
        <div className="flex flex-col items-center gap-[6px]">
          <OptionTree />
          <Button className="w-[100px]">Restablecer todo</Button>
        </div>
        <div className="pt-[6px]">
          <ColorSettings />
        </div>
      </div>

      <div className="mt-[13px] mr-5 flex justify-end gap-[3px]">
        <Button className="w-24 outline -outline-offset-1 outline-black">Aceptar</Button>
        <Button className="w-24">Cancelar</Button>
        <Button className="w-24">Ayuda</Button>
      </div>
    </div>
  );
}

export default function App() {
  return (
    <div className="relative flex h-screen flex-col overflow-hidden bg-black pt-0.5 font-['Lato',sans-serif] text-[11px] text-black">
      <div className="ml-px flex min-h-0 flex-1 flex-col border-r border-l-2 border-r-[#d0d4e8] border-l-[#5c6078] bg-[#c4c8da]">
        <MenuBar />
        <AnnotationToolbar />
        <main className="relative flex min-h-0 flex-1">
          <CommandTabs />
          <div className="flex w-[29px] shrink-0 flex-col items-center gap-[9px] bg-gradient-to-r from-[#dde0ee] to-[#b8bcd2] pt-[26px]">
            <span className="w-[22px] border-t-2 border-dotted border-[#8a8ea8]" />
            <IconButton name="noteNew" label="Nueva nota" />
            <IconButton name="noteEdit" label="Editar nota" />
          </div>
          <div className="flex min-w-0 flex-1 flex-col">
            <div className="flex min-h-0 flex-1">
              <FeaturePanel />
              <div className="w-[169px] shrink-0 bg-gradient-to-b from-white via-[#f4f5f9] to-[#d6dbe6]" />
              <Sheet />
            </div>
            <SheetTabs />
          </div>
        </main>
        <FormatBar />
        <StatusBar />
      </div>
      <div className="flex h-[30px] shrink-0 items-start justify-between overflow-hidden pr-6 pl-3 leading-[13px] text-white">
        <span className="-mt-1">4.4 Win32</span>
        <span className="-mt-1">reciclaje</span>
      </div>
      <div className="h-0.5 shrink-0 bg-[#d4d0c8]" />
      <OptionsDialog />
    </div>
  );
}
